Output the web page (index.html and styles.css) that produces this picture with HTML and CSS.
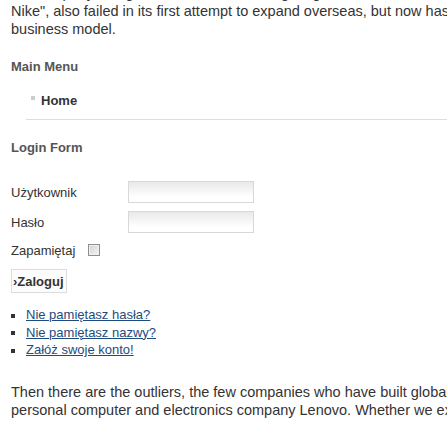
FILE: index.html
```html
<!DOCTYPE html>
<html>
<head>
<meta charset="utf-8">
<link rel="stylesheet" href="styles.css">
</head>
<body>
<div class="page">
  <p class="article top">the company has grown into one of the largest global brands, “the Chinese
Nike", also failed in its first attempt to expand overseas, but now has a different
business model.</p>

  <section class="module menu-module">
    <h3 class="module-title">Main Menu</h3>
    <ul class="menu">
      <li class="menu-item">Home</li>
    </ul>
  </section>

  <section class="module login-module">
    <h3 class="module-title">Login Form</h3>
    <form class="login">
      <div class="field">
        <label class="label">Użytkownik</label>
        <input class="input" type="text">
      </div>
      <div class="field">
        <label class="label">Hasło</label>
        <input class="input" type="password">
      </div>
      <div class="field remember">
        <label class="label">Zapamiętaj</label>
        <span class="check"></span>
      </div>
      <button class="submit" type="button">›Zaloguj</button>
      <ul class="links">
        <li class="link-item"><a href="#">Nie pamiętasz hasła?</a></li>
        <li class="link-item"><a href="#">Nie pamiętasz nazwy?</a></li>
        <li class="link-item"><a href="#">Załóż swoje konto!</a></li>
      </ul>
    </form>
  </section>

  <p class="article bottom">Then there are the outliers, the few companies who have built globally recognised brands, such as
personal computer and electronics company Lenovo. Whether we examine their strategies or not</p>
</div>
</body>
</html>
```

FILE: styles.css
```css
html, body {
  margin: 0;
  padding: 0;
  background: #fff;
  overflow: hidden;
}
body {
  font-family: "Liberation Sans", Arial, sans-serif;
  color: #333;
}
.page {
  padding: 0 0 0 11px;
  width: 900px;
}
.article {
  font-size: 14.5px;
  line-height: 18px;
  margin: 0;
  white-space: pre-line;
  color: #333;
}
.article.top {
  margin-top: -16px;
}
.module {
  display: block;
}
.module-title {
  font-size: 13px;
  font-weight: bold;
  color: #555;
  margin: 0;
  line-height: 16px;
}
.menu-module {
  padding-top: 21px;
}
.menu {
  list-style: none;
  margin: 18px 0 0 15px;
  padding: 0 0 10px 0;
  border-bottom: 1px solid #ddd;
}
.menu-item {
  font-size: 13px;
  font-weight: bold;
  color: #333;
  line-height: 16px;
  padding-left: 15px;
  position: relative;
}
.menu-item::before {
  content: "";
  position: absolute;
  left: 5px;
  top: 3px;
  width: 4px;
  height: 4px;
  background: #ccc;
}
.login-module {
  padding-top: 20px;
}
.login {
  margin: 25px 0 0 0;
  display: flex;
  flex-direction: column;
  align-items: flex-start;
}
.field {
  display: flex;
  align-items: center;
  height: 22px;
  margin-bottom: 8px;
}
.label {
  font-size: 13px;
  color: #333;
  width: 117px;
}
.remember {
  height: 18px;
  margin-bottom: 10px;
}
.remember .label {
  width: 77px;
}
.input {
  box-sizing: border-box;
  width: 126px;
  height: 22px;
  border: 1px solid #d8d8d8;
  background: linear-gradient(#e9e9e9, #fff 75%);
  margin: 0;
  padding: 0;
}
.check {
  box-sizing: border-box;
  width: 12px;
  height: 12px;
  border: 1px solid #8e8f8f;
  background: linear-gradient(135deg, #d2d2d2, #f5f5f5);
  box-shadow: inset 0 0 0 1px #f0f0f0;
}
.submit {
  display: block;
  box-sizing: border-box;
  width: 56px;
  height: 24px;
  padding: 0 0 0 1px;
  text-align: left;
  border: 1px solid #dcdcdc;
  background: #fcfcfc;
  font-family: "Liberation Sans", Arial, sans-serif;
  font-size: 13px;
  font-weight: bold;
  color: #333;
  margin: 0;
}
.links {
  margin: 13px 0 0 0;
  padding: 0;
  list-style: none;
  font-size: 13px;
  line-height: 17.5px;
}
.link-item::before {
  content: "";
  display: inline-block;
  width: 4px;
  height: 4px;
  background: #333;
  margin-right: 11px;
  vertical-align: middle;
}
.links a {
  color: #1d4c7d;
  text-decoration: underline;
}
.article.bottom {
  margin-top: 24px;
}
```
